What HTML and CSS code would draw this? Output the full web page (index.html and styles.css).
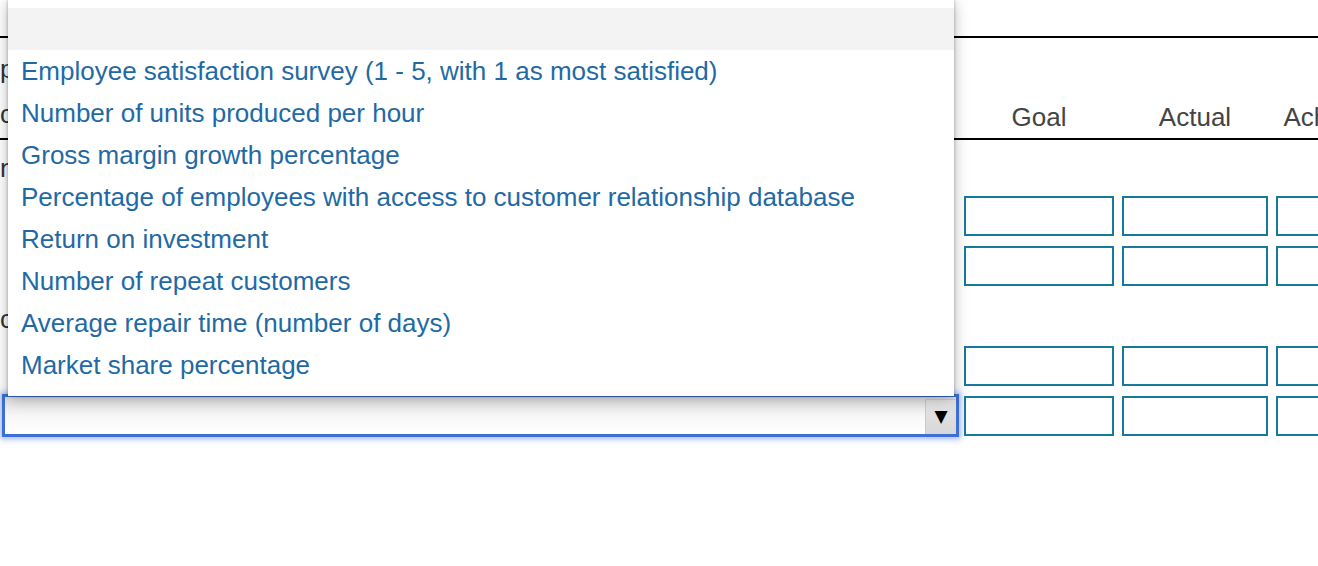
FILE: index.html
```html
<!DOCTYPE html>
<html lang="en">
<head>
<meta charset="utf-8">
<title>Balanced scorecard</title>
<link rel="stylesheet" href="styles.css">
</head>
<body>
<div class="sheet">
  <div class="rule"></div>
  <div class="row head">
    <div class="label two">perspective<br>customer measures</div>
    <div class="colhead">Goal</div>
    <div class="colhead">Actual</div>
    <div class="colhead last">Achieved</div>
  </div>
  <div class="rule"></div>
  <div class="row section first"><div class="label">non-financial</div></div>
  <div class="row entry">
    <div class="label"></div>
    <div class="cell"><div class="box"></div></div>
    <div class="cell"><div class="box"></div></div>
    <div class="cell"><div class="box"></div></div>
  </div>
  <div class="row entry">
    <div class="label"></div>
    <div class="cell"><div class="box"></div></div>
    <div class="cell"><div class="box"></div></div>
    <div class="cell"><div class="box"></div></div>
  </div>
  <div class="row section"><div class="label">customer</div></div>
  <div class="row entry">
    <div class="label"></div>
    <div class="cell"><div class="box"></div></div>
    <div class="cell"><div class="box"></div></div>
    <div class="cell"><div class="box"></div></div>
  </div>
  <div class="row entry">
    <div class="label">
      <div class="select">
        <div class="select-value"></div>
        <div class="select-btn">&#9660;</div>
      </div>
    </div>
    <div class="cell"><div class="box"></div></div>
    <div class="cell"><div class="box"></div></div>
    <div class="cell"><div class="box"></div></div>
  </div>
</div>

<div class="dropdown">
  <div class="opt blank"></div>
  <div class="opt">Employee satisfaction survey (1 - 5, with 1 as most satisfied)</div>
  <div class="opt">Number of units produced per hour</div>
  <div class="opt">Gross margin growth percentage</div>
  <div class="opt">Percentage of employees with access to customer relationship database</div>
  <div class="opt">Return on investment</div>
  <div class="opt">Number of repeat customers</div>
  <div class="opt">Average repair time (number of days)</div>
  <div class="opt">Market share percentage</div>
</div>
</body>
</html>
```

FILE: styles.css
```css
html, body {
  margin: 0;
  padding: 0;
  overflow: hidden;
  background: #ffffff;
}

body {
  font-family: "Liberation Sans", Arial, sans-serif;
  font-size: 26px;
  color: #333333;
  width: 1318px;
  height: 566px;
}

.sheet {
  padding-top: 36px;
  width: 1426px;
}

.rule {
  height: 2px;
  background: #000000;
}

.row {
  display: grid;
  grid-template-columns: 960px 158px 154px 154px;
}

.label {
  white-space: nowrap;
  color: #333333;
}

.head {
  height: 100px;
  align-items: end;
}

.label.two {
  line-height: 45px;
  padding-bottom: 1px;
}

.colhead {
  text-align: center;
  line-height: 42px;
  color: #444444;
  white-space: nowrap;
}

.colhead.last {
  padding-right: 24px;
}

.section {
  height: 50px;
  line-height: 42px;
  padding-top: 2px;
  box-sizing: border-box;
}

.section.first {
  height: 56px;
  padding-top: 7px;
}

.entry {
  height: 50px;
}

.cell {
  padding-left: 4px;
}

.box {
  width: 150px;
  height: 40px;
  box-sizing: border-box;
  border: 2px solid #17799b;
  background: #ffffff;
}

.cell + .cell .box {
  width: 146px;
}

.select {
  margin: -2px 0 0 2px;
  width: 957px;
  height: 43px;
  box-sizing: border-box;
  border: 3px solid #3d6fd9;
  box-shadow: 0 0 6px 2px rgba(61, 111, 217, 0.5);
  background: linear-gradient(#e2e2e2, #f8f8f8 55%, #ffffff);
  display: flex;
  align-items: flex-end;
  padding-top: 2px;
}

.select-value {
  flex: 1;
}

.select-btn {
  width: 31px;
  height: 35px;
  box-sizing: border-box;
  background: linear-gradient(#e6e6e6, #d8d8d8);
  border-left: 1px solid #c9c9c9;
  border-top: 1px solid #cfcfcf;
  color: #000000;
  font-family: "DejaVu Sans", sans-serif;
  font-size: 17px;
  line-height: 33px;
  text-align: center;
}

.dropdown {
  position: absolute;
  left: 8px;
  top: 0;
  width: 946px;
  padding: 8px 0 10px;
  background: #ffffff;
  box-shadow: 0 3px 14px rgba(0, 0, 0, 0.28), 0 0 3px rgba(0, 0, 0, 0.3);
}

.opt {
  height: 42px;
  line-height: 42px;
  padding-left: 13px;
  color: #1f6aa5;
  white-space: nowrap;
}

.opt.blank {
  background: #f3f3f3;
}
```
